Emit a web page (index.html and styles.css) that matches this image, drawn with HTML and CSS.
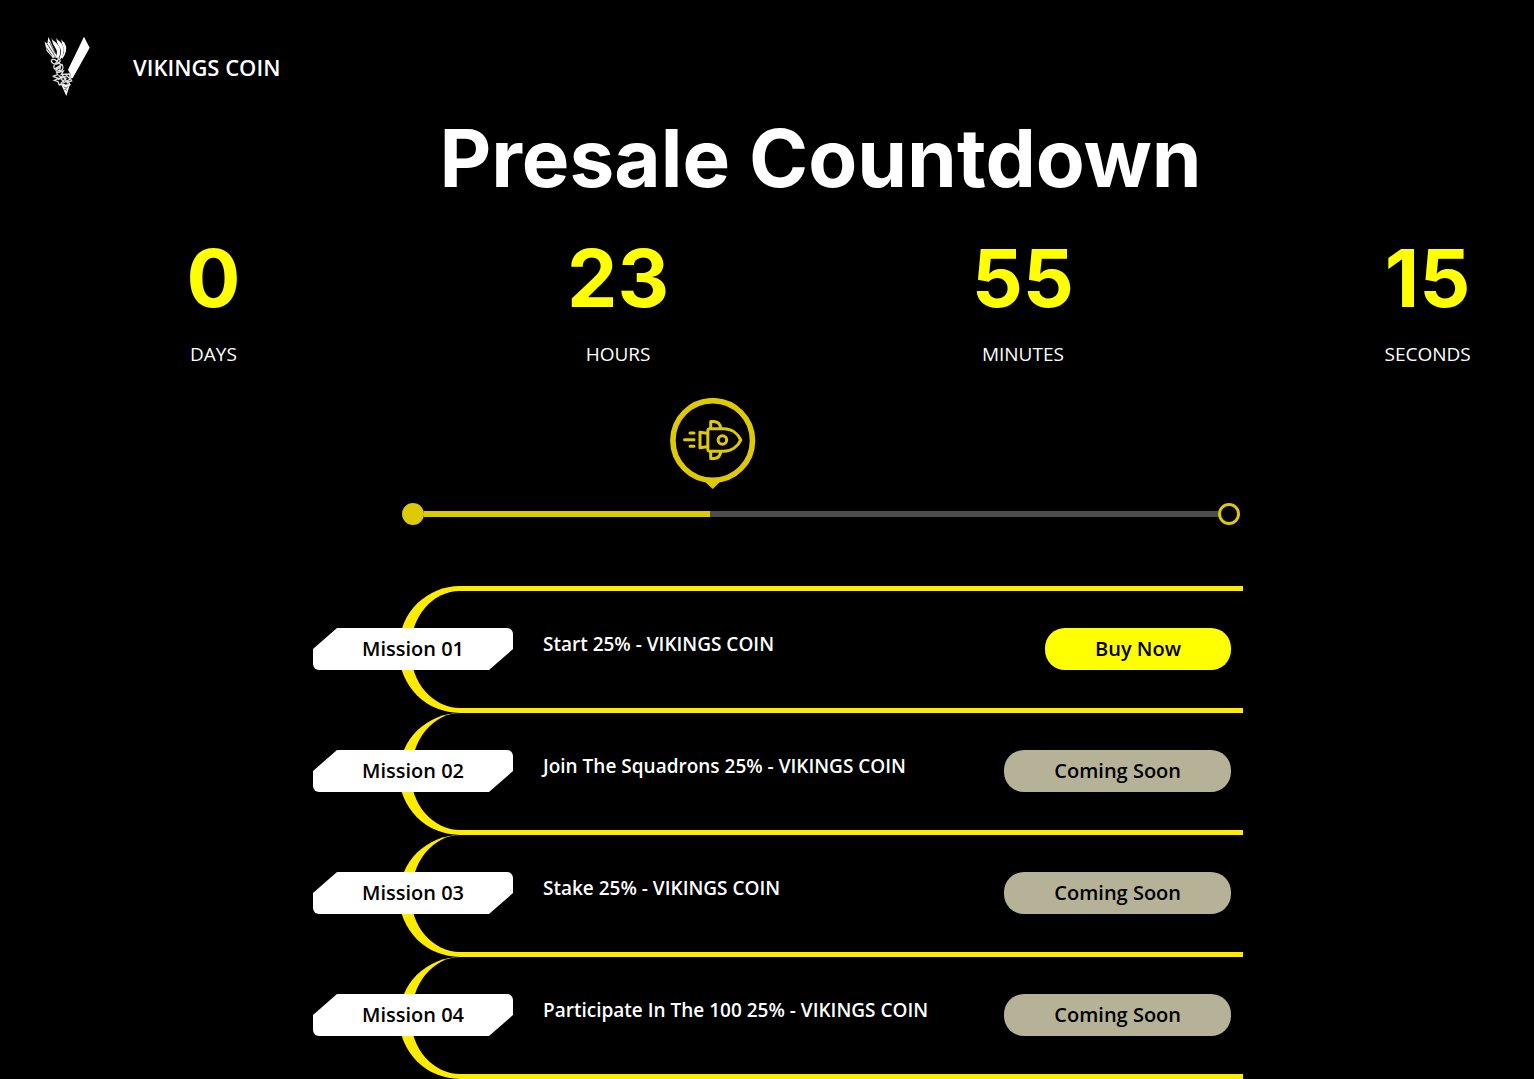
FILE: index.html
```html
<!DOCTYPE html>
<html lang="en">
  <head>
    <meta charset="UTF-8" />
    <meta name="viewport" content="width=device-width, initial-scale=1.0" />
    <title>Vikings Coin</title>
    <link rel="stylesheet" href="styles.css" />
  </head>
  <body>
    <header class="header">
      <svg class="logo" viewBox="42 33 138 183" aria-hidden="true">
        <path class="fill" d="M162 35 L179 68 L128 160 L121 158 L121 148 L114 134 Z" />
        <path class="fill" d="M55 36 L62 51 L80 92 L67 97 L50 78 L44 50 L52 56 Z" />
        <path class="cut" d="M51 56 L74 92 M58 50 L76 86 M49 68 L66 92" />
        <path class="fill" d="M64 38 Q66 45 76 51 Q92 66 91 80 Q91 91 85 100 L77 96 Q84 83 78 72 Q67 57 64 38 Z" />
        <path class="fill" d="M79 38 Q82 46 91 51 Q104 65 101 80 Q99 94 92 103 L88 98 Q97 81 90 68 Q80 56 79 38 Z" />
        <path class="fill" d="M94 43 Q97 49 104 54 Q111 65 108 78 Q105 92 97 101 L94 98 Q106 81 101 68 Q94 56 94 43 Z" />
        <path class="knot" d="M67 98 Q77 92 87 101 Q95 108 84 116 Q71 121 64 110 Q63 101 75 104 L93 119 M87 100 L72 122 Q69 132 80 133 L91 126 L88 142 Q76 141 77 130 L96 118 Q104 132 91 139 L71 129" />
        <path class="knot" d="M68 154 L83 149 L80 143 L100 138 L94 148 L118 147 L121 159 L125 168 L115 170 L120 179 L107 183 L99 177 L88 180 L84 170 L73 166 L86 160 L68 154 M84 164 L110 152 L121 162 L102 173 L88 153 L108 160 L92 176 M96 148 L114 176" />
        <path class="fill" d="M94 179 L120 178 L109 213 Z" />
        <path class="cut" d="M101 185 L109 190 L114 184 M103 193 L111 196" />
      </svg>
      <span class="brand">VIKINGS COIN</span>
    </header>

    <main>
      <h1 class="title">Presale Countdown</h1>

      <div class="countdown">
        <div class="unit">
          <div class="number">0</div>
          <div class="label">DAYS</div>
        </div>
        <div class="unit">
          <div class="number">23</div>
          <div class="label">HOURS</div>
        </div>
        <div class="unit">
          <div class="number">55</div>
          <div class="label">MINUTES</div>
        </div>
        <div class="unit">
          <div class="number">15</div>
          <div class="label">SECONDS</div>
        </div>
      </div>

      <div class="content">
        <div class="timeline">
          <svg class="rocket" viewBox="0 0 86 92" aria-hidden="true">
            <circle cx="42.7" cy="42.5" r="39.8" stroke-width="5.6" />
            <path class="tip" d="M34 83 L42.7 91 L51 83 Z" />
            <path d="M40 30.8 H54 C62 30.8 68 36 70.8 42 C68 48 62 53.2 54 53.2 H40 Q37.8 53.2 37.8 51 V33 Q37.8 30.8 40 30.8 Z" />
            <circle cx="52.4" cy="42" r="4.3" />
            <path d="M37 35.3 L30 34.2 V49.8 L37 48.7" />
            <path d="M40.7 30 V23.4 H44 Q50 24 50.7 30" />
            <path d="M40.7 54 V60.6 H44 Q50 60 50.7 54" />
            <path d="M14.5 41.8 H24 M20 35 H24 M20 48.3 H24" />
          </svg>
          <div class="track">
            <span class="dot full"></span>
            <span class="line done"></span>
            <span class="line"></span>
            <span class="dot"></span>
          </div>
        </div>

        <div class="missions">
          <div class="mission">
            <div class="tag">Mission 01</div>
            <div class="text">Start 25% - VIKINGS COIN</div>
            <button class="btn buy">Buy Now</button>
          </div>
          <div class="mission">
            <div class="tag">Mission 02</div>
            <div class="text">Join The Squadrons 25% - VIKINGS COIN</div>
            <button class="btn">Coming Soon</button>
          </div>
          <div class="mission">
            <div class="tag">Mission 03</div>
            <div class="text">Stake 25% - VIKINGS COIN</div>
            <button class="btn">Coming Soon</button>
          </div>
          <div class="mission">
            <div class="tag">Mission 04</div>
            <div class="text">Participate In The 100 25% - VIKINGS COIN</div>
            <button class="btn">Coming Soon</button>
          </div>
        </div>
      </div>
    </main>
  </body>
</html>
```
FILE: styles.css
```css
* {
  margin: 0;
  padding: 0;
  box-sizing: border-box;
}
body {
  background: #000;
  color: #fff;
  font-family: "Segoe UI", "Open Sans", sans-serif;
  overflow-x: hidden;
}
.header {
  display: flex;
  align-items: center;
  gap: 43px;
  padding: 36px 44px 13px;
}
.logo {
  width: 46px;
  height: 61px;
}
.logo .fill {
  fill: #fff;
}
.logo .cut {
  fill: none;
  stroke: #000;
  stroke-width: 2;
}
.logo .knot {
  fill: none;
  stroke: #ddd;
  stroke-width: 4;
}
.brand {
  font-size: 22px;
  font-weight: 600;
}
.title {
  padding-left: 107px;
  font-family: Inter, sans-serif;
  font-size: 80px;
  font-weight: 700;
  line-height: 96px;
  text-align: center;
}
/* the last column runs past the right edge */
.countdown {
  display: flex;
  margin: 24px -96px 0 11px;
}
.unit {
  flex: 1;
  text-align: center;
}
.number {
  color: #ff0;
  font-family: Inter, sans-serif;
  font-size: 80px;
  font-weight: 700;
  line-height: 96px;
}
.label {
  margin-top: 13px;
  font-size: 19px;
  line-height: 30px;
}
.content {
  padding-left: 108px;
}
.timeline {
  max-width: 838px;
  margin: 29px auto 0;
}
.rocket {
  display: block;
  width: 86px;
  height: 92px;
  margin-left: 32%;
  fill: none;
  stroke: #dec905;
  stroke-width: 3;
  stroke-linecap: round;
  stroke-linejoin: round;
}
.rocket .tip {
  fill: #dec905;
  stroke: none;
}
.track {
  display: flex;
  align-items: center;
  margin-top: 13px;
}
.dot {
  width: 22px;
  height: 22px;
  border: 3px solid #dec905;
  border-radius: 50%;
}
.dot.full {
  background: #dec905;
}
.line {
  flex: 64;
  height: 6px;
  background: #4c4c4c;
}
.line.done {
  flex: 36;
  background: #dec905;
}
.missions {
  max-width: 844px;
  margin: 61px auto 0;
}
.mission {
  display: flex;
  align-items: flex-start;
  padding: 37px 12px 38px 0;
  border: solid #ffeb00;
  border-width: 0 0 5px 12px;
  border-radius: 61px 0 0 61px;
}
.mission:first-child {
  border-top-width: 5px;
}
.tag {
  width: 200px;
  margin-left: -98px;
  border-radius: 6px;
  background: #fff;
  clip-path: polygon(12% 0, 100% 0, 100% 50%, 88% 100%, 0 100%, 0 50%);
  color: #000;
  font-size: 20px;
  font-weight: 600;
  line-height: 42px;
  text-align: center;
}
.text {
  margin-left: 30px;
  font-size: 19px;
  font-weight: 600;
  line-height: 32px;
}
.btn {
  margin-left: auto;
  padding: 0 50px;
  border: none;
  border-radius: 20px;
  background: #b5b298;
  color: #000;
  font-family: inherit;
  font-size: 20px;
  font-weight: 600;
  line-height: 42px;
  cursor: pointer;
}
.btn.buy {
  background: #ff0;
}
```
